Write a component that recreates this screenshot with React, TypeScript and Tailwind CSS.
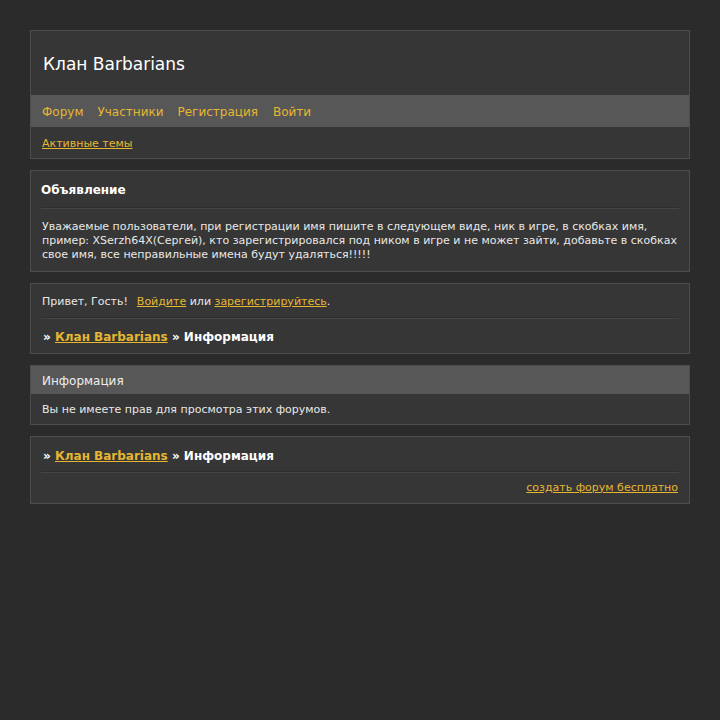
const font = { fontFamily: '"DejaVu Sans", Verdana, sans-serif' };

const Sep = () => <div className="h-[2px] border-t border-[#2e2e2e] border-b border-b-[#454545]" />;

const Crumbs = () => (
  <div className="text-[12px] font-bold text-white">
    » <a href="#" className="text-[#e6b632] underline">Клан Barbarians</a> » Информация
  </div>
);

const App = () => {
  return (
    <div className="min-h-[720px] bg-[#2b2b2b] pt-[30px] px-[30px] text-[#e8e8e8]" style={font}>
      <div className="flex flex-col gap-[11px]">
        {/* header */}
        <div className="border border-[#4d4d4d] bg-[#363636]">
          <div className="h-[64px] flex items-center pt-[3px] px-3 text-[17px] text-white">Клан Barbarians</div>
          <div className="h-[32px] bg-[#575757] flex items-center gap-[14px] pt-[2px] px-[11px] text-[12px] text-[#e6b632]">
            <a href="#">Форум</a>
            <a href="#">Участники</a>
            <a href="#">Регистрация</a>
            <a href="#" className="ml-px">Войти</a>
          </div>
          <div className="h-[31px] flex items-center pt-[3px] px-[11px] text-[11px]">
            <a href="#" className="text-[#e6b632] underline">Активные темы</a>
          </div>
        </div>

        {/* announcement */}
        <div className="border border-[#4d4d4d] bg-[#363636] px-[10px]">
          <div className="pt-[12px] pb-[10px] leading-[14px] text-[12px] font-bold text-white">Объявление</div>
          <Sep />
          <div className="pt-[11px] pb-[9px] px-px text-[11px] leading-[14px]">
            Уважаемые пользователи, при регистрации имя пишите в следующем виде, ник в игре, в скобках имя, пример: XSerzh64X(Сергей), кто зарегистрировался под ником в игре и не может зайти, добавьте в скобках свое имя, все неправильные имена будут удаляться!!!!!
          </div>
        </div>

        {/* welcome */}
        <div className="border border-[#4d4d4d] bg-[#363636] px-[10px]">
          <div className="h-[33px] flex items-center pt-[3px] px-px text-[11px]">
            <span className="mr-[9px]">Привет, Гость!</span>
            <a href="#" className="text-[#e6b632] underline">Войдите</a>&nbsp;или&nbsp;
            <a href="#" className="text-[#e6b632] underline">зарегистрируйтесь</a>.
          </div>
          <Sep />
          <div className="h-[34px] flex items-center pt-[2px] px-[2px]">
            <Crumbs />
          </div>
        </div>

        {/* info */}
        <div className="border border-[#4d4d4d] bg-[#363636]">
          <div className="h-[28px] bg-[#575757] flex items-center pt-[2px] px-[11px] text-[12px] text-[#eeeeee]">Информация</div>
          <div className="h-[30px] flex items-center pt-[3px] px-[11px] text-[11px]">Вы не имеете прав для просмотра этих форумов.</div>
        </div>

        {/* footer */}
        <div className="border border-[#4d4d4d] bg-[#363636] px-[10px]">
          <div className="h-[34px] flex items-center pt-[3px] px-[2px]">
            <Crumbs />
          </div>
          <Sep />
          <div className="h-[30px] flex items-center justify-end pr-px text-[11px]">
            <a href="#" className="text-[#e6b632] underline">создать форум бесплатно</a>
          </div>
        </div>
      </div>
    </div>
  );
};

export default App;
